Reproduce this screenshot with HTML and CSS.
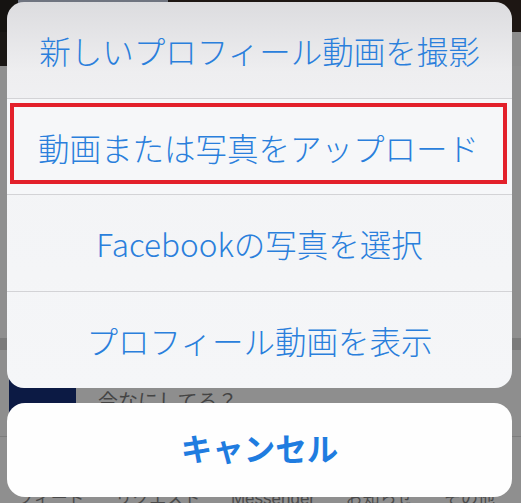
FILE: index.html
```html
<!DOCTYPE html>
<html lang="ja">
  <head>
    <meta charset="UTF-8" />
    <meta name="viewport" content="width=device-width, initial-scale=1.0" />
    <title>プロフィール動画</title>
    <link rel="stylesheet" href="styles.css">
  </head>
  <body>
    <div class="screen">
      <div class="backdrop">
        <div class="cover">
          <div class="cover-left"></div>
          <div class="cover-mid"></div>
          <div class="cover-right"></div>
        </div>
        <div class="profile-strip"></div>
        <div class="feed"></div>
        <div class="feed-divider"></div>
        <div class="composer">
          <div class="composer-thumb"></div>
          <span class="composer-text">今なにしてる？</span>
        </div>
        <div class="tabbar">
          <span>フィード</span>
          <span>リクエスト</span>
          <span>Messenger</span>
          <span>お知らせ</span>
          <span>その他</span>
        </div>
      </div>

      <div class="sheet-layer">
        <div class="sheet">
          <div class="sheet-item">新しいプロフィール動画を撮影</div>
          <div class="sheet-item selected">
            <div class="highlight">動画または写真をアップロード</div>
          </div>
          <div class="sheet-item">Facebookの写真を選択</div>
          <div class="sheet-item">プロフィール動画を表示</div>
        </div>
        <div class="cancel">キャンセル</div>
      </div>
    </div>
  </body>
</html>
```

FILE: styles.css
```css
html,
body {
  margin: 0;
  padding: 0;
}
body {
  font-family: "Noto Sans CJK JP", "Noto Sans", sans-serif;
  background: #8c8c8c;
}
.screen {
  position: relative;
  width: 521px;
  height: 503px;
  overflow: hidden;
  background: #8d8d8d;
}

/* dimmed page behind the sheet */
.backdrop {
  display: flex;
  flex-direction: column;
  height: 100%;
}
.cover {
  display: flex;
  height: 32px;
}
.cover-left {
  width: 18px;
  background: #151311;
}
.cover-mid {
  width: 150px;
  background: #6f7480;
}
.cover-right {
  flex: 1;
  background: #1d1613;
}
.profile-strip {
  width: 18px;
  height: 34px;
  background: #1a1715;
}
.feed {
  flex: 1;
  background: #8f8f8f;
}
.feed-divider {
  height: 12px;
  background: #7b7b7b;
}
.composer {
  display: flex;
  align-items: flex-start;
  gap: 22px;
  height: 86px;
  padding-left: 9px;
  background: #8e8e8e;
  border-bottom: 1px solid #7d7d7d;
}
.composer-thumb {
  width: 67px;
  height: 68px;
  background: #0c1a44;
}
.composer-text {
  margin-top: 36px;
  font-size: 20px;
  color: #444;
}
.tabbar {
  display: flex;
  justify-content: space-between;
  height: 14px;
  padding: 52px 26px 0 17px;
  background: #8f8f8f;
  font-family: "Liberation Sans", "Noto Sans CJK JP", sans-serif;
  font-size: 17px;
  line-height: 20px;
  color: #4a4a4a;
}

/* action sheet */
.sheet-layer {
  position: absolute;
  inset: 0;
  display: flex;
  flex-direction: column;
  padding: 2px 9px 0 7px;
  gap: 15px;
}
.sheet {
  display: flex;
  flex-direction: column;
  border-radius: 17px;
  overflow: hidden;
  background: linear-gradient(180deg, #dcdcdf 0%, #eeeef0 18%, #f3f4f6 40%, #f5f6f8 100%);
}
.sheet-item {
  display: flex;
  justify-content: center;
  align-items: center;
  height: 96px;
  font-size: 31.5px;
  font-weight: 300;
  color: #2a7fdc;
  border-top: 1px solid #d3d3d6;
}
.sheet-item:first-child {
  border-top: none;
}
.sheet-item.selected {
  align-items: stretch;
  padding: 4px 5px 10px 3px;
  box-sizing: border-box;
  background: #f6f7f9;
}
.highlight {
  flex: 1;
  display: flex;
  justify-content: center;
  align-items: center;
  border: 4px solid #e3202b;
  padding-top: 6px;
}
.cancel {
  display: flex;
  justify-content: center;
  align-items: center;
  height: 94px;
  padding-bottom: 6px;
  box-sizing: border-box;
  border-radius: 18px;
  background: #fefefe;
  font-size: 31.5px;
  font-weight: 700;
  color: #1f7ce0;
}
```
